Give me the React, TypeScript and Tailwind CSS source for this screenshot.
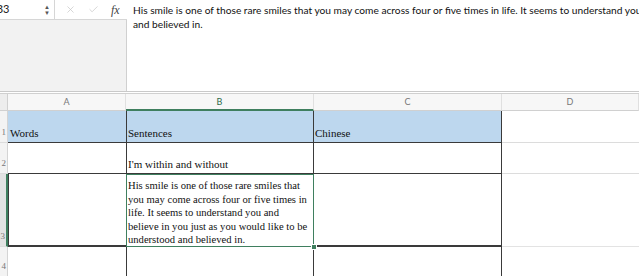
import { X, Check } from "lucide-react";

const dark = "border-[#3a3a3a]";

const cellLines = [
  "His smile is one of those rare smiles that",
  "you may come across four or five times in",
  "life. It seems to understand you and",
  "believe in you just as you would like to be",
  "understood and believed in.",
];

const RowHead = ({ n, h, active }: { n: string; h: string; active?: boolean }) => (
  <div
    className={`${h} flex items-end justify-end pr-[1px] pb-[3px] text-[9px] text-[#777] border-b border-[#dcdcdc] ${
      active ? "bg-[#e3e3e3] border-r-2 border-r-[#3f7f5f]" : "bg-[#f3f3f3] border-r border-r-[#d4d4d4]"
    }`}
  >
    {n}
  </div>
);

export default function App() {
  return (
    <div className="w-[639px] h-[276px] overflow-hidden bg-white" style={{ fontFamily: "'Liberation Serif', serif" }}>
      {/* formula bar */}
      <div className="flex h-[92px] border-b border-[#c9c9c9]" style={{ fontFamily: "Lato, 'Open Sans', sans-serif" }}>
        <div className="w-[127px] shrink-0 flex flex-col">
          <div className="h-[20px] flex items-center border-b border-[#d6d6d6]">
            <div className="w-[55px] h-full flex items-center justify-between border-r border-[#d6d6d6] pl-[1px] pr-[4px] text-[11px] text-[#222]">
              <span className="-ml-[5px]">B3</span>
              <div className="flex flex-col items-center leading-none text-[6px] text-[#555]">
                <span>▲</span>
                <span>▼</span>
              </div>
            </div>
            <X className="ml-[10px] w-[11px] h-[11px] text-[#c4c4c4]" strokeWidth={1.5} />
            <Check className="ml-[12px] w-[11px] h-[11px] text-[#c4c4c4]" strokeWidth={1.5} />
            <span className="ml-[12px] text-[12px] italic text-[#444]" style={{ fontFamily: "'Liberation Serif', serif" }}>
              fx
            </span>
          </div>
          <div className="flex-1 bg-[#f2f2f2] border-r border-[#d0d0d0]" />
        </div>
        <div className="flex-1 overflow-hidden pl-[6px] pt-[3px] text-[10.2px] leading-[14px] text-[#111] whitespace-nowrap">
          <div>
            His smile is one of those rare smiles that you may come across four or five times in life. It seems to understand you and
            believe in you just as you would like to be understood
          </div>
          <div>and believed in.</div>
        </div>
      </div>

      {/* sheet */}
      <div className="mt-[1px] border-t border-[#d0d0d0] grid grid-cols-[8px_118px_188px_188px_137px]">
        {/* column headers */}
        <div className="h-[17px] bg-[#ededed] border-b border-r border-[#d0d0d0]" />
        {["A", "B", "C", "D"].map((c) => (
          <div
            key={c}
            className={`h-[17px] flex items-center justify-center text-[9px] bg-[#f7f7f7] border-r border-[#e0e0e0] ${
              c === "B" ? "text-[#2d6a4a] border-b-2 border-b-[#3f7f5f]" : "text-[#777] border-b border-b-[#d0d0d0]"
            }`}
            style={{ fontFamily: "Lato, sans-serif" }}
          >
            {c}
          </div>
        ))}

        {/* row 1 */}
        <RowHead n="1" h="h-[32px]" />
        <div className={`h-[32px] bg-[#bdd7ee] border-b ${dark} flex items-end px-[2px] pb-[1px] text-[11px] text-[#111]`}>Words</div>
        <div className={`h-[32px] bg-[#bdd7ee] border-b border-x ${dark} flex items-end px-[1px] pb-[1px] text-[11px] text-[#111]`}>
          Sentences
        </div>
        <div className={`h-[32px] bg-[#bdd7ee] border-b border-r ${dark} flex items-end px-[1px] pb-[1px] text-[11px] text-[#111]`}>
          Chinese
        </div>
        <div className="h-[32px] border-b border-[#dcdcdc]" />

        {/* row 2 */}
        <RowHead n="2" h="h-[31px]" />
        <div className={`h-[31px] border-b ${dark}`} />
        <div className={`h-[31px] border-b border-x ${dark} flex items-end px-[1px] pb-[1px] text-[11px] text-[#111]`}>
          I'm within and without
        </div>
        <div className={`h-[31px] border-b border-r ${dark}`} />
        <div className="h-[31px] border-b border-[#dcdcdc]" />

        {/* row 3 */}
        <RowHead n="3" h="h-[73px]" active />
        <div className={`h-[73px] border-l border-b-2 ${dark}`} />
        <div className="relative h-[73px] border-[1.5px] border-[#3f7f5f] pl-[1px] pt-[4px] text-[10.6px] leading-[13.6px] text-[#111]">
          {cellLines.map((l) => (
            <div key={l} className="whitespace-nowrap">
              {l}
            </div>
          ))}
          <div className="absolute -right-[4px] -bottom-[4px] w-[6px] h-[6px] bg-[#3f7f5f] border border-white" />
        </div>
        <div className={`h-[73px] border-b-2 border-r ${dark}`} />
        <div className="h-[73px] border-b border-[#e3e3e3]" />

        {/* row 4 */}
        <RowHead n="4" h="h-[30px]" />
        <div className="h-[30px]" />
        <div className={`h-[30px] border-x ${dark}`} />
        <div className={`h-[30px] border-r ${dark}`} />
        <div className="h-[30px]" />
      </div>
    </div>
  );
}
